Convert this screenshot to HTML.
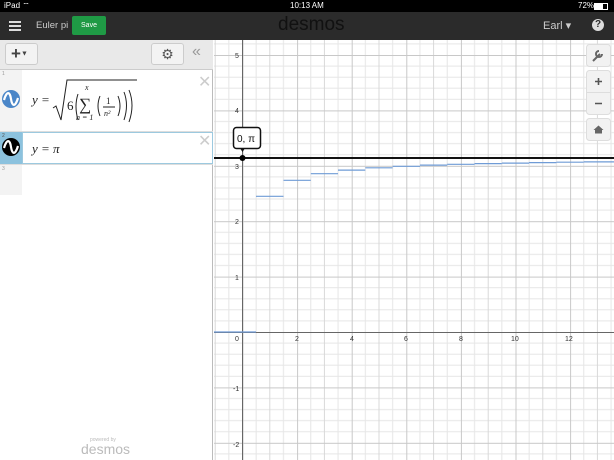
<!DOCTYPE html>
<html><head><meta charset="utf-8"><style>
*{margin:0;padding:0;box-sizing:border-box}
body{width:614px;height:460px;overflow:hidden;position:relative;font-family:"Liberation Sans",sans-serif;background:#fff}
.status{position:absolute;left:0;top:0;width:614px;height:12px;background:#000;color:#fff;font-size:8px;line-height:12px}
.hdr{position:absolute;left:0;top:12px;width:614px;height:28px;background:#2b2b2b;color:#ddd}
.abs{position:absolute}
.panel{position:absolute;left:0;top:40px;width:213px;height:420px;background:#fff;border-right:1px solid #bbb}
.tool{position:absolute;left:0;top:0;width:213px;height:30px;background:#e9e9e9;border-bottom:1px solid #ccc}
.btn{position:absolute;background:#f3f3f3;border:1px solid #ccc;border-radius:3px}
.math{font-family:"Liberation Serif",serif;font-style:italic;font-size:13px;color:#222}
</style></head><body>
<div class="status"><span class="abs" style="left:4px">iPad ︎⌔</span><span class="abs" style="left:290px">10:13 AM</span><span class="abs" style="left:578px">72%</span><div class="abs" style="left:594px;top:3px;width:14px;height:7px;border:1px solid #fff"><div style="width:8px;height:5px;background:#fff"></div></div></div>
<div class="hdr">
 <div class="abs" style="left:9px;top:9px;width:12px;height:2px;background:#ddd;box-shadow:0 4px 0 #ddd,0 8px 0 #ddd"></div>
 <div class="abs" style="left:36px;top:8px;font-size:9.5px;color:#ccc">Euler pi</div>
 <div class="abs" style="left:72px;top:4px;width:34px;height:19px;background:#1f9a45;border-radius:2px;color:#fff;font-size:7px;text-align:center;line-height:19px">Save</div>
 <div class="abs" style="left:278px;top:2px;font-size:19px;color:#111;letter-spacing:0px">desmos</div>
 <div class="abs" style="left:543px;top:7px;font-size:11px;color:#ccc">Earl ▾</div>
 <div class="abs" style="left:592px;top:7px;width:12px;height:12px;border-radius:50%;background:#ddd;color:#2b2b2b;font-size:10px;font-weight:bold;text-align:center;line-height:12px">?</div>
</div>
<svg class="abs" style="left:0;top:0" width="614" height="460">
<defs><pattern id="g" patternUnits="userSpaceOnUse" x="242.5" y="332" width="54.6" height="55.4">
<g stroke="#e6e6e6" stroke-width="1"><line x1="13.65" y1="0" x2="13.65" y2="56"/><line x1="40.95" y1="0" x2="40.95" y2="56"/>
<line x1="0" y1="11.08" x2="55" y2="11.08"/><line x1="0" y1="22.16" x2="55" y2="22.16"/><line x1="0" y1="33.24" x2="55" y2="33.24"/><line x1="0" y1="44.32" x2="55" y2="44.32"/></g>
<line x1="27.3" y1="0" x2="27.3" y2="56" stroke="#d8d8d8"/>
<g stroke="#c8c8c8"><line x1="0.5" y1="0" x2="0.5" y2="56"/><line x1="0" y1="0.5" x2="55" y2="0.5"/></g></pattern></defs>
<rect x="214" y="40" width="400" height="420" fill="url(#g)"/>
<line x1="242.5" y1="40" x2="242.5" y2="460" stroke="#666"/>
<line x1="214" y1="332.5" x2="614" y2="332.5" stroke="#666"/>
<g font-size="7" fill="#333" font-family="Liberation Sans">
<text x="235" y="58">5</text><text x="235" y="113">4</text><text x="235" y="169">3</text><text x="235" y="224">2</text><text x="235" y="280">1</text>
<text x="235" y="341">0</text><text x="295" y="341">2</text><text x="350" y="341">4</text><text x="404" y="341">6</text><text x="459" y="341">8</text><text x="511" y="341">10</text><text x="565" y="341">12</text>
<text x="233" y="391">-1</text><text x="233" y="447">-2</text></g>
<g stroke="#6f9bd6" stroke-width="1.2">
<line x1="214" y1="332" x2="256" y2="332"/>
<line x1="256" y1="196.3" x2="283.5" y2="196.3"/><line x1="283.5" y1="180.3" x2="310.8" y2="180.3"/><line x1="310.8" y1="173.7" x2="338" y2="173.7"/><line x1="338" y1="170.1" x2="365.3" y2="170.1"/><line x1="365.3" y1="167.8" x2="392.6" y2="167.8"/><line x1="392.6" y1="166.3" x2="420" y2="166.3"/><line x1="420" y1="165.1" x2="447.2" y2="165.1"/><line x1="447.2" y1="164.3" x2="474.5" y2="164.3"/><line x1="474.5" y1="163.6" x2="501.8" y2="163.6"/><line x1="501.8" y1="163.1" x2="529" y2="163.1"/><line x1="529" y1="162.6" x2="556.4" y2="162.6"/><line x1="556.4" y1="162.2" x2="583.7" y2="162.2"/><line x1="583.7" y1="161.9" x2="614" y2="161.9"/></g>
<line x1="214" y1="158" x2="614" y2="158" stroke="#111" stroke-width="2"/>
<circle cx="242.5" cy="158" r="3" fill="#000"/>
<rect x="233.5" y="127.5" width="27" height="21" rx="3" fill="#fff" stroke="#111" stroke-width="1.5"/>
<path d="M240.5 149 l2 3 l2 -3z" fill="#111"/>
<text x="237" y="142" font-size="10" fill="#111" font-family="Liberation Sans">0, π</text>
<g fill="#f2f2f2" stroke="#ddd"><rect x="586.5" y="44.5" width="24" height="22" rx="3"/><rect x="586.5" y="70.5" width="24" height="44" rx="3"/><rect x="586.5" y="118.5" width="24" height="22" rx="3"/></g>
<line x1="587" y1="92.5" x2="610" y2="92.5" stroke="#ddd"/>
<path d="M593 61 l7 -7 m-1 -3 a3 3 0 1 0 3 3" stroke="#666" stroke-width="2" fill="none"/>
<path d="M595 81.5h7M598.5 78v7M595 103.5h7" stroke="#555" stroke-width="1.6"/>
<path d="M593.5 130 l5 -4.5 l5 4.5 h-1.5 v3.5 h-7 v-3.5z" fill="#666"/>
</svg>
<div class="panel">
 <div class="tool">
  <div class="btn" style="left:5px;top:3px;width:33px;height:22px;font-size:17px;font-weight:bold;color:#444;line-height:20px;padding-left:5px">+<span style="font-size:7px;vertical-align:middle">▼</span></div>
  <div class="btn" style="left:151px;top:3px;width:33px;height:22px;color:#555;font-size:14px;text-align:center;line-height:21px">⚙</div>
  <div class="abs" style="left:192px;top:3px;font-size:16px;color:#999">«</div>
 </div>
 <div class="abs" style="left:0;top:30px;width:22px;height:125px;background:#f3f3f3"></div>
 <div class="abs" style="left:0;top:92px;width:22px;height:32px;background:#8cc2de"></div>
 <div class="abs" style="left:22px;top:92px;width:191px;height:32px;border:1px solid #9cc9df"></div>
 <div class="abs" style="left:0;top:91px;width:213px;height:1px;background:#ddd"></div>
 <div class="abs" style="left:0;top:124px;width:213px;height:1px;background:#ddd"></div>
 <div class="abs" style="left:2px;top:31px;font-size:5px;color:#999">1</div>
 <div class="abs" style="left:2px;top:93px;font-size:5px;color:#555">2</div>
 <div class="abs" style="left:2px;top:126px;font-size:5px;color:#999">3</div>
 <svg class="abs" style="left:2px;top:50px" width="18" height="18"><circle cx="9" cy="9" r="9" fill="#4a86c8"/><path d="M2 10 C5 0 8 2 9 9 C10 16 13 18 16 8" stroke="#fff" stroke-width="2.2" fill="none"/></svg>
 <svg class="abs" style="left:2px;top:98px" width="18" height="18"><circle cx="9" cy="9" r="9" fill="#000"/><path d="M2 10 C5 0 8 2 9 9 C10 16 13 18 16 8" stroke="#fff" stroke-width="2.2" fill="none"/></svg>
 <div class="abs" style="left:198px;top:32px;font-size:16px;color:#ccc">✕</div>
 <div class="abs" style="left:198px;top:91px;font-size:16px;color:#ccc">✕</div>
 <div class="abs math" style="left:32px;top:52px">y = </div>
 <svg class="abs" style="left:52px;top:38px" width="90" height="52"><path d="M1 30 l3 -2 l5 14 l6 -40 h70" stroke="#222" stroke-width="1" fill="none"/><text x="15" y="32" font-family="Liberation Serif" font-size="13" fill="#222">6</text><path d="M26 16 q-4 12 0 26" stroke="#222" fill="none"/><text x="33" y="12" font-style="italic" font-family="Liberation Serif" font-size="8" fill="#222">x</text><text x="27" y="32" font-family="Liberation Serif" font-size="17" fill="#222">∑</text><text x="24" y="42" font-style="italic" font-family="Liberation Serif" font-size="8" fill="#222">n = 1</text><path d="M48 18 q-4 10 0 20 M66 18 q4 10 0 20 M72 14 q5 13 0 28 M77 12 q6 15 0 32" stroke="#222" fill="none"/><text x="54" y="26" font-family="Liberation Serif" font-size="9" fill="#222">1</text><line x1="51" y1="29" x2="63" y2="29" stroke="#222"/><text x="52" y="38" font-style="italic" font-family="Liberation Serif" font-size="8" fill="#222">n²</text></svg>
 <div class="abs math" style="left:32px;top:101px">y = π</div>
 <div class="abs" style="left:90px;top:397px;font-size:5px;color:#bbb">powered by</div>
 <div class="abs" style="left:81px;top:401px;font-size:14px;color:#bbb">desmos</div>
</div>
</body></html>
